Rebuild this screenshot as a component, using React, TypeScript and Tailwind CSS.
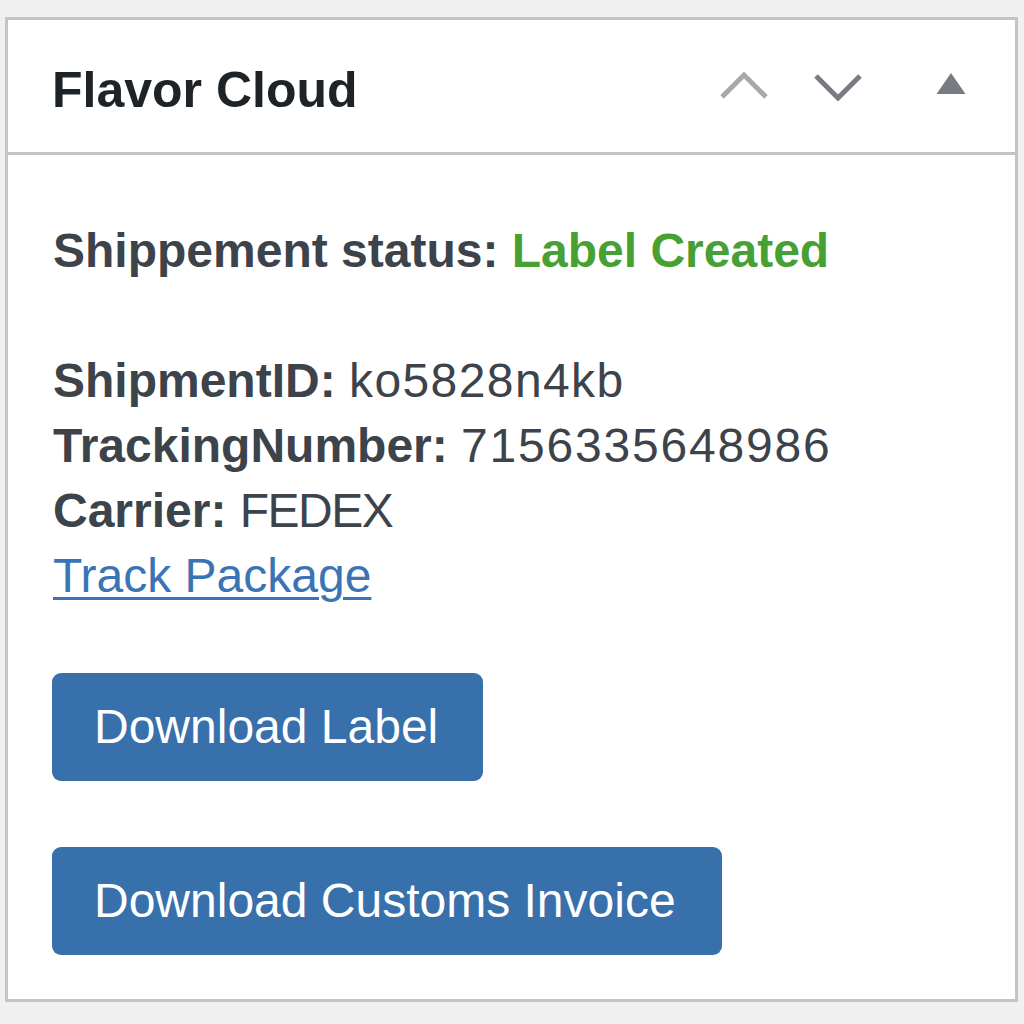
import React from 'react';

const font = { fontFamily: '"Liberation Sans", Arial, sans-serif' };

function ChevronUp() {
  return (
    <svg width="52" height="32" viewBox="0 0 52 32" fill="none">
      <path d="M4 27 L26 5 L48 27" stroke="#a7aaad" strokeWidth="5" />
    </svg>
  );
}

function ChevronDown() {
  return (
    <svg width="52" height="32" viewBox="0 0 52 32" fill="none">
      <path d="M4 6 L26 28 L48 6" stroke="#787c82" strokeWidth="5" />
    </svg>
  );
}

function Caret() {
  return (
    <svg width="52" height="32" viewBox="0 0 52 32">
      <polygon points="11.5,24 26,3 40.5,24" fill="#787c82" />
    </svg>
  );
}

export default function App() {
  return (
    <div className="w-[1024px] h-[1024px] bg-[#f0f0f1] pt-[17px] pl-[5px]" style={font}>
      <div className="w-[1013px] h-[985px] bg-white border-[3px] border-[#c3c4c7] flex flex-col">
        <div className="h-[135px] border-b-[3px] border-[#c3c4c7] flex items-center pl-[44px] pr-[38px]">
          <h2 className="mt-[8px] text-[50px] leading-[50px] font-bold text-[#1d2327]">Flavor Cloud</h2>
          <div className="ml-auto flex items-center">
            <ChevronUp />
            <div className="ml-[42px]">
              <ChevronDown />
            </div>
            <div className="ml-[61px]">
              <Caret />
            </div>
          </div>
        </div>

        <div className="pt-[63px] px-[45px] text-[48px] leading-[65px] text-[#3c434a]">
          <p className="mb-[65px]">
            <span className="font-bold">Shippement status: </span>
            <span className="font-bold text-[#47a033]">Label Created</span>
          </p>
          <p>
            <span className="font-bold">ShipmentID:</span>{' '}
            <span className="tracking-[1.4px]">ko5828n4kb</span>
          </p>
          <p>
            <span className="font-bold">TrackingNumber:</span>{' '}
            <span className="tracking-[1.8px]">7156335648986</span>
          </p>
          <p>
            <span className="font-bold">Carrier:</span>{' '}
            <span className="tracking-[-1.5px]">FEDEX</span>
          </p>
          <a
            href="#"
            className="text-[#3a74b5] underline decoration-[3px] underline-offset-[5px]"
          >
            Track Package
          </a>

          <div className="mt-[65px] -ml-[1px] flex flex-col items-start gap-[66px]">
            <button className="h-[108px] pl-[42px] pr-[45px] rounded-[9px] bg-[#3870ab] text-white text-[48px] leading-none">
              Download Label
            </button>
            <button className="h-[108px] pl-[42px] pr-[46px] rounded-[9px] bg-[#3870ab] text-white text-[48px] leading-none">
              Download Customs Invoice
            </button>
          </div>
        </div>
      </div>
    </div>
  );
}
